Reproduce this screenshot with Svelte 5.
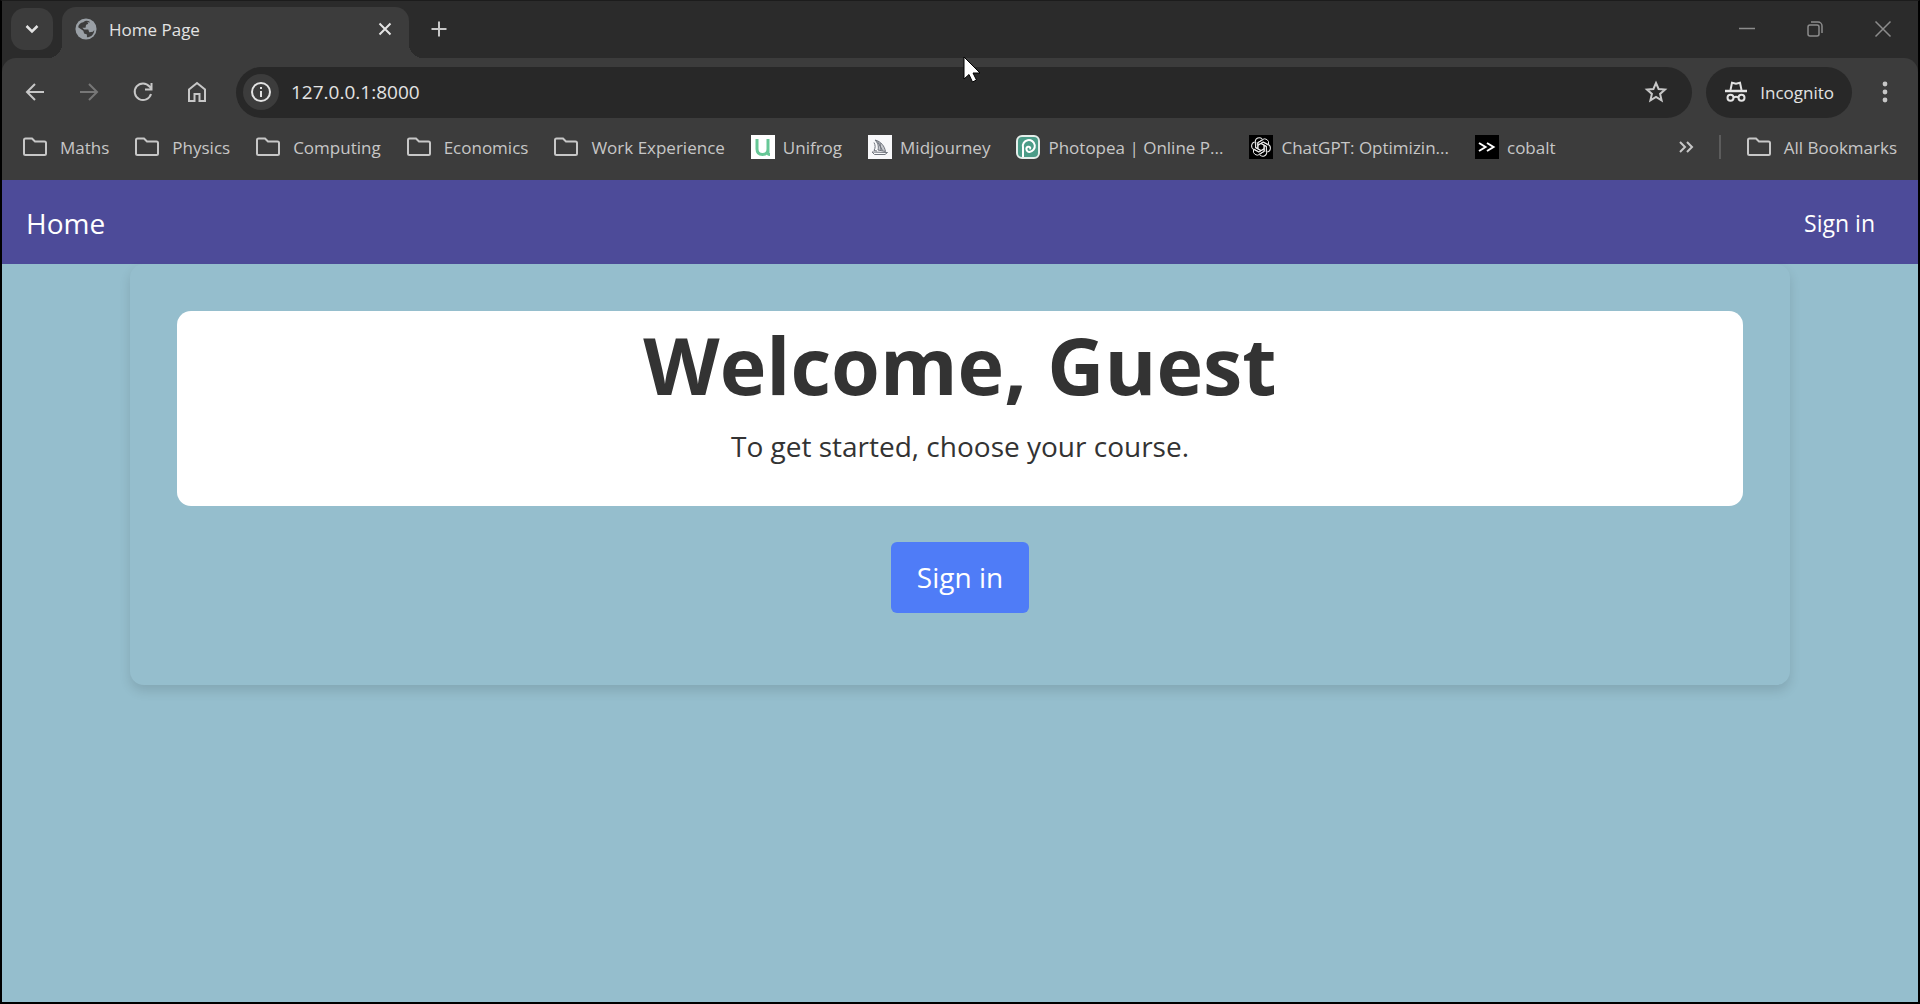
<script lang="ts">
	interface Bookmark {
		label: string;
		icon: 'folder' | 'unifrog' | 'midjourney' | 'photopea' | 'chatgpt' | 'cobalt';
	}

	const bookmarks: Bookmark[] = [
		{ label: 'Maths', icon: 'folder' },
		{ label: 'Physics', icon: 'folder' },
		{ label: 'Computing', icon: 'folder' },
		{ label: 'Economics', icon: 'folder' },
		{ label: 'Work Experience', icon: 'folder' },
		{ label: 'Unifrog', icon: 'unifrog' },
		{ label: 'Midjourney', icon: 'midjourney' },
		{ label: 'Photopea | Online P...', icon: 'photopea' },
		{ label: 'ChatGPT: Optimizin...', icon: 'chatgpt' },
		{ label: 'cobalt', icon: 'cobalt' }
	];

	let address = $state('127.0.0.1:8000');
</script>

{#snippet folder()}
	<svg class="icon" viewBox="0 0 24 24">
		<path d="M1 18.500V5a1.500 1.500 0 0 1 1.500-1.500h6.500l3 3h9.500A1.500 1.500 0 0 1 23 8v10.500a1.500 1.500 0 0 1-1.500 1.500h-19A1.500 1.500 0 0 1 1 18.500z" />
	</svg>
{/snippet}

<div class="window">
	<header class="tabs">
		<button class="tab-search" aria-label="Search tabs">
			<svg class="icon" viewBox="0 0 24 24"><path d="M6.500 9l5.500 5.500L17.500 9" stroke-width="2.500" /></svg>
		</button>
		<div class="tab">
			<svg class="globe" viewBox="0 0 24 24">
				<circle cx="12" cy="12" r="11.500" fill="#9aa0a6" />
				<path d="M9 4.500c3-2 5-1.500 7-.5l-1 3-3 .5-.5 3H8l2 2h4.500l1 3 4-.5 1.500-2c0 5-4 8-8 8v-3l-3-1-1-3-5.500-4C3.500 7 6 5 9 4.500z" fill="#3c3c3c" />
				<path d="M13.500 4l5 2.500 2 4-3 1.500-2-2h-3.500l.5-3 2-.5z" fill="#9aa0a6" />
			</svg>
			<span class="tab-title">Home Page</span>
			<button class="tab-close" aria-label="Close tab">
				<svg class="icon" viewBox="0 0 24 24"><path d="M6.500 6.500l11 11M17.500 6.500l-11 11" /></svg>
			</button>
		</div>
		<button class="plain" aria-label="New tab">
			<svg class="icon" viewBox="0 0 24 24"><path d="M12 4.500v15M4.500 12h15" /></svg>
		</button>
		<div class="controls">
			<button class="plain" aria-label="Minimise">
				<svg class="icon" viewBox="0 0 24 24"><path d="M4 11.500h16" stroke-width="1.500" /></svg>
			</button>
			<button class="plain" aria-label="Restore">
				<svg class="icon" viewBox="0 0 24 24">
					<g stroke-width="1.500">
						<rect x="5" y="8" width="11" height="11" rx="2" />
						<path d="M8 5h7a4 4 0 0 1 4 4v7" />
					</g>
				</svg>
			</button>
			<button class="plain" aria-label="Close window">
				<svg class="icon" viewBox="0 0 24 24"><path d="M4.500 4.500l15 15M19.500 4.500l-15 15" stroke-width="1.500" /></svg>
			</button>
		</div>
	</header>

	<div class="toolbar">
		<div class="history">
			<button class="plain" aria-label="Back">
				<svg class="icon" viewBox="0 0 24 24"><path d="M21 12H4M12 4l-8 8 8 8" /></svg>
			</button>
			<button class="plain dim" aria-label="Forward">
				<svg class="icon" viewBox="0 0 24 24"><path d="M3 12h17M12 4l8 8-8 8" /></svg>
			</button>
			<button class="plain" aria-label="Reload">
				<svg class="icon" viewBox="0 0 24 24"><path d="M20 14a8.300 8.300 0 1 1-1.500-7.500l1.500 2M20.500 3v6.500H14" /></svg>
			</button>
			<button class="plain" aria-label="Home page">
				<svg class="icon" viewBox="0 0 24 24"><path d="M4 9.500L12 3l8 6.500V21h-5.500v-7h-5v7H4z" /></svg>
			</button>
		</div>
		<div class="omnibox">
			<button class="site-info" aria-label="View site information">
				<svg class="icon" viewBox="0 0 24 24">
					<circle cx="12" cy="12" r="9" />
					<path d="M12 11v6M12 7v2" />
				</svg>
			</button>
			<input type="text" aria-label="Address" bind:value={address} />
			<button class="plain" aria-label="Bookmark this tab">
				<svg class="icon" viewBox="0 0 24 24">
					<path d="M12 3l2.600 6 6.400.6-4.900 4.300 1.500 6.400L12 16.900l-5.600 3.400 1.500-6.400L3 9.600 9.400 9z" />
				</svg>
			</button>
		</div>
		<button class="incognito">
			<svg class="icon" viewBox="0 0 24 24">
				<path d="M6.500 10L8 2.800l4 .9 4-.9 1.500 7.200" />
				<path d="M1 11h22" stroke-width="2.500" />
				<circle cx="6.500" cy="17.800" r="3" />
				<circle cx="17.500" cy="17.800" r="3" />
				<path d="M9.500 17.500q2.500-1.500 5 0" />
			</svg>
			Incognito
		</button>
		<button class="plain" aria-label="Menu">
			<svg class="icon dots" viewBox="0 0 24 24">
				<circle cx="12" cy="4" r="2.400" />
				<circle cx="12" cy="12" r="2.400" />
				<circle cx="12" cy="20" r="2.400" />
			</svg>
		</button>
	</div>

	<nav class="bookmarks" aria-label="Bookmarks">
		{#each bookmarks as bookmark}
			<a class="bookmark {bookmark.icon}" href="#top">
				{#if bookmark.icon === 'folder'}
					{@render folder()}
				{:else if bookmark.icon === 'unifrog'}
					<svg class="favicon" viewBox="0 0 24 24">
						<rect width="24" height="24" fill="#fff" />
						<path d="M6 4v10q0 5.500 5.500 5.500T17 14V4M17 13v5q0 1.500 2 1.500" fill="none" stroke="#66c796" stroke-width="3" />
					</svg>
				{:else if bookmark.icon === 'midjourney'}
					<svg class="favicon" viewBox="0 0 24 24">
						<rect width="24" height="24" fill="#f8f8fa" />
						<g fill="none" stroke="#70747d">
							<path d="M7 5c6 1.500 9.500 6 10.500 11.500L10 15c1-4-.5-7.500-3-10z" fill="#c5c7cc" />
							<path d="M6 7.500c1.500 3 1.500 5 0 8l3 .5M9.500 6.500l5 9M12 8l1 7M4 17l15.500.5L17 19.500H6.500z" />
						</g>
					</svg>
				{:else if bookmark.icon === 'photopea'}
					<svg class="favicon" viewBox="0 0 24 24">
						<rect x="1" y="1" width="22" height="22" rx="5" fill="#4b9c88" stroke="#e5eeeb" stroke-width="2" />
						<path d="M7 22v-9.500a6 6 0 1 1 6.500 4.500c-3.500 0-4-4.500-1.500-5.200 2-.5 3 1.500 1.500 2.200" fill="none" stroke="#fff" stroke-width="2" />
					</svg>
				{:else if bookmark.icon === 'chatgpt'}
					<svg class="favicon" viewBox="0 0 24 24">
						<rect width="24" height="24" fill="#000" />
						<g fill="none" stroke="#e8e8e8">
							{#each [0, 60, 120, 180, 240, 300] as angle}
								<path d="M9 13.700V7.500l4.500-3a4 4 0 0 1 6 4.500M9 10l5-3 5 3" transform="rotate({angle} 12 12)" />
							{/each}
						</g>
					</svg>
				{:else}
					<svg class="favicon" viewBox="0 0 24 24">
						<rect width="24" height="24" fill="#000" />
						<path d="M4 8l6.500 4L4 16M12 8l6.500 4-6.500 4" fill="none" stroke="#fff" stroke-width="2" />
					</svg>
				{/if}
				<span>{bookmark.label}</span>
			</a>
		{/each}
		<button class="plain overflow" aria-label="More bookmarks">
			<svg class="icon" viewBox="0 0 24 24"><path d="M6 7l5 5-5 5M13 7l5 5-5 5" /></svg>
		</button>
		<span class="divider"></span>
		<a class="bookmark folder" href="#top">
			{@render folder()}
			<span>All Bookmarks</span>
		</a>
	</nav>

	<div class="page" id="top">
		<nav class="site-nav" aria-label="Site">
			<a class="brand" href="#top">Home</a>
			<a href="#sign-in">Sign in</a>
		</nav>
		<main class="card">
			<section class="welcome">
				<h1>Welcome, Guest</h1>
				<p>To get started, choose your course.</p>
			</section>
			<a class="sign-in" id="sign-in" href="#sign-in">Sign in</a>
		</main>
	</div>

	<svg class="pointer" viewBox="0 0 18 27">
		<path d="M1 1v22l5-4.500 3.500 7.500 4-2-3.500-7h7z" fill="#fff" stroke="#000" />
	</svg>
</div>

<style>
	:global(body) {
		margin: 0;
		background: #000;
	}

	.window {
		position: relative;
		box-sizing: border-box;
		display: flex;
		flex-direction: column;
		min-height: 100vh;
		border: 2px solid #000;
		border-top: 1px solid #1c1c1c;
		background: #2b2b2b;
		color: #c7c7c7;
		font-family: 'Open Sans', 'Noto Sans', sans-serif;
		font-size: 17px;
	}

	a {
		color: inherit;
		text-decoration: none;
	}

	button {
		display: flex;
		align-items: center;
		justify-content: center;
		flex: none;
		padding: 0;
		border: 0;
		background: none;
		color: inherit;
		font: inherit;
	}

	.icon,
	.favicon {
		flex: none;
		width: 24px;
		height: 24px;
	}

	.icon {
		fill: none;
		stroke: currentColor;
		stroke-width: 2;
	}

	.icon.dots {
		fill: currentColor;
		stroke: none;
	}

	.plain {
		width: 24px;
		height: 24px;
	}

	.dim {
		color: #777;
	}

	.tabs {
		display: flex;
		align-items: center;
		box-sizing: border-box;
		height: 57px;
		padding: 0 23px 2px 9px;
	}

	.tab-search {
		width: 42px;
		height: 42px;
		margin-right: 9px;
		border-radius: 14px;
		background: #3c3c3c;
		color: #e3e3e3;
	}

	.tab {
		position: relative;
		display: flex;
		align-items: center;
		align-self: flex-end;
		box-sizing: border-box;
		width: 347px;
		height: 51px;
		margin: 0 18px -2px 0;
		padding: 0 12px 8px 13px;
		border-radius: 14px 14px 0 0;
		background: #3c3c3c;
		color: #e3e3e3;
	}

	.tab::before,
	.tab::after {
		content: '';
		position: absolute;
		bottom: 0;
		width: 14px;
		height: 14px;
	}

	.tab::before {
		right: 100%;
		background: radial-gradient(circle at 0 0, transparent 14px, #3c3c3c 14px);
	}

	.tab::after {
		left: 100%;
		background: radial-gradient(circle at 100% 0, transparent 14px, #3c3c3c 14px);
	}

	.globe {
		width: 22px;
		height: 22px;
		margin-right: 12px;
	}

	.tab-title {
		flex: 1;
		padding-top: 2px;
	}

	.controls {
		display: flex;
		gap: 44px;
		margin-left: auto;
		color: #8c8c8c;
	}

	.toolbar {
		display: flex;
		align-items: center;
		height: 68px;
		padding: 0 21px;
		border-radius: 14px 14px 0 0;
		background: #3c3c3c;
	}

	.history {
		display: flex;
		gap: 30px;
		margin-right: 27px;
	}

	.omnibox {
		display: flex;
		align-items: center;
		flex: 1;
		box-sizing: border-box;
		height: 51px;
		margin-right: 14px;
		padding: 0 24px 0 7px;
		border-radius: 26px;
		background: #282828;
	}

	.site-info {
		width: 36px;
		height: 36px;
		margin-right: 12px;
		border-radius: 50%;
		background: #3c3c3c;
		color: #e3e3e3;
	}

	.omnibox input {
		flex: 1;
		min-width: 0;
		padding: 0;
		border: 0;
		outline: 0;
		background: none;
		color: #e3e3e3;
		font: inherit;
		font-size: 19px;
	}

	.incognito {
		box-sizing: border-box;
		height: 51px;
		gap: 12px;
		margin-right: 21px;
		padding: 0 18px;
		border-radius: 26px;
		background: #282828;
		color: #e3e3e3;
	}

	.bookmarks {
		display: flex;
		align-items: center;
		box-sizing: border-box;
		gap: 26px;
		height: 54px;
		padding: 0 21px 12px;
		background: #3c3c3c;
		white-space: nowrap;
	}

	.bookmark {
		display: flex;
		align-items: center;
		gap: 8px;
	}

	.bookmark.folder {
		gap: 13px;
	}

	.overflow {
		width: 14px;
		margin-left: auto;
	}

	.divider {
		width: 2px;
		height: 24px;
		background: #5c5c5c;
	}

	.page {
		flex: 1;
		background: #95becd;
		color: #333;
	}

	.site-nav {
		display: flex;
		align-items: center;
		justify-content: space-between;
		box-sizing: border-box;
		height: 84px;
		padding: 2px 43px 0 24px;
		background: #4d4b99;
		color: #fff;
		font-size: 23px;
	}

	.brand {
		font-size: 28px;
	}

	.card {
		display: flex;
		flex-direction: column;
		align-items: center;
		gap: 36px;
		margin: 0 128px;
		padding: 47px 47px 72px;
		border-radius: 14px;
		box-shadow: 0 6px 12px rgba(0, 0, 0, 0.12);
		text-align: center;
	}

	.welcome {
		box-sizing: border-box;
		width: 100%;
		padding: 6px 16px 39px;
		border-radius: 14px;
		background: #fff;
	}

	h1 {
		margin: 0 0 12px;
		font-size: 79px;
		font-weight: 700;
		line-height: 96px;
	}

	p {
		margin: 0;
		font-size: 28px;
		line-height: 42px;
	}

	.sign-in {
		padding: 14px 26px;
		border-radius: 6px;
		background: #4f7cf7;
		color: #fff;
		font-size: 28px;
		line-height: 43px;
	}

	.pointer {
		position: absolute;
		top: 55px;
		left: 50%;
		width: 18px;
		height: 27px;
		margin-left: 3px;
	}
</style>
